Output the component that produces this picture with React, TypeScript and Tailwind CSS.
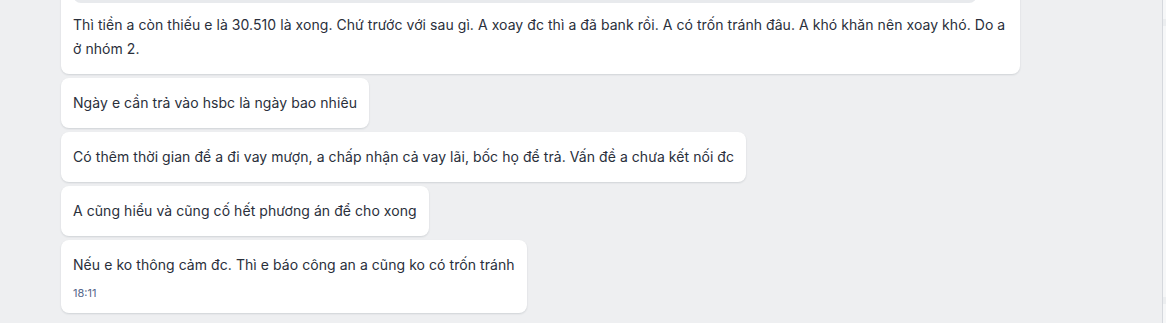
// App.tsx - chat thread snippet, incoming message bubbles stacked at the bottom of the pane.

const messages = [
  "Ngày e cần trả vào hsbc là ngày bao nhiêu",
  "Có thêm thời gian để a đi vay mượn, a chấp nhận cả vay lãi, bốc họ để trả. Vấn đề a chưa kết nối đc",
  "A cũng hiểu và cũng cố hết phương án để cho xong",
];

function Bubble({ children, className = "" }: { children: React.ReactNode; className?: string }) {
  return (
    <div
      className={`rounded-lg bg-white px-3 py-[13px] text-[14px] leading-[24px] tracking-[0.06px] text-[#2a2f3b] shadow-[0_1px_2px_rgba(30,40,60,0.14)] ${className}`}
    >
      {children}
    </div>
  );
}

export default function App() {
  return (
    <div
      className="flex h-[323px] w-[1166px] overflow-hidden bg-[#eeeff1]"
      style={{ fontFamily: "Inter, 'Noto Sans', sans-serif" }}
    >
      <div className="flex min-w-0 flex-1 flex-col justify-end gap-1 pb-[10px] pl-[61px]">
        <Bubble className="w-[959px] pt-0 leading-[23px]">
          <div className="h-[40px] w-[904px] rounded-b-lg bg-[#e8eaed]" />
          <p className="mt-[10px]">
            Thì tiền a còn thiếu e là 30.510 là xong. Chứ trước với sau gì. A xoay đc thì a đã bank rồi. A có trốn tránh
            đâu. A khó khăn nên xoay khó. Do a
            <br />ở nhóm 2.
          </p>
        </Bubble>
        {messages.map((m) => (
          <Bubble key={m} className="w-fit">
            <p>{m}</p>
          </Bubble>
        ))}
        <Bubble className="w-fit">
          <p>Nếu e ko thông cảm đc. Thì e báo công an a cũng ko có trốn tránh</p>
          <p className="mt-[9px] text-[11px] leading-[14px] tracking-normal text-[#56678a]">18:11</p>
        </Bubble>
      </div>

      {/* scrollbar strip */}
      <div className="flex w-[4px] flex-col justify-between border-l border-[#d5d8dd] bg-[#f6f7f8] py-[19px]">
        <div className="h-[7px] bg-[#eceef0]" />
        <div className="h-[7px] bg-[#eceef0]" />
      </div>
    </div>
  );
}
